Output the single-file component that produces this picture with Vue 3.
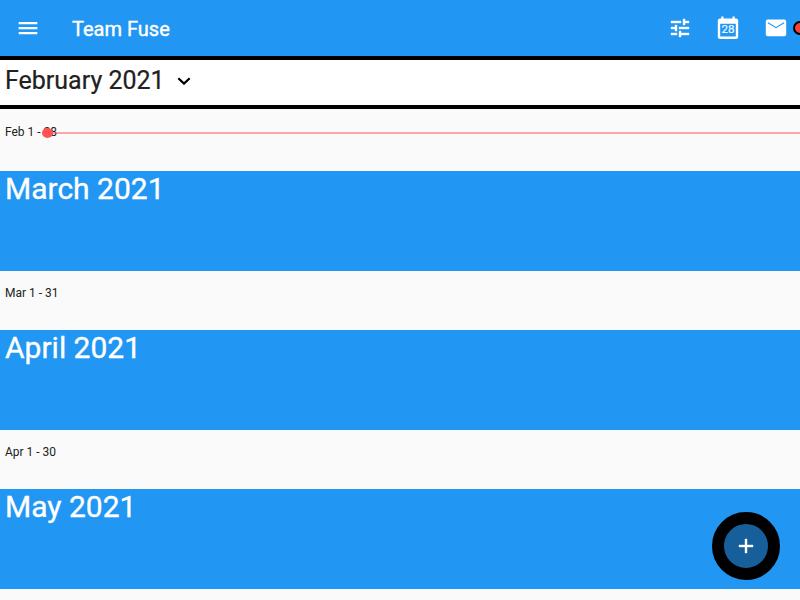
<script setup>
const months = [
  { title: 'February 2021', range: 'Feb 1 - 28', current: true },
  { title: 'March 2021', range: 'Mar 1 - 31' },
  { title: 'April 2021', range: 'Apr 1 - 30' },
  { title: 'May 2021' },
]
</script>

<template>
  <div class="screen">
    <header class="bar">
      <svg class="icon" viewBox="0 0 24 24"><path d="M2.700 18.200h18.600v-2.300H2.700zm0-5h18.600v-2.300H2.700zm0-7.300v2.300h18.600V5.900z" /></svg>
      <h1 class="title">Team Fuse</h1>
      <div class="actions">
        <svg class="icon bold" viewBox="0 0 24 24"><path d="M3 17v2h6v-2H3zM3 5v2h10V5H3zm10 16v-2h8v-2h-8v-2h-2v6h2zM7 9v2H3v2h4v2h2V9H7zm14 4v-2H11v2h10zm-6-4h2V7h4V5h-4V3h-2v6z" /></svg>
        <div class="today">
          <svg class="icon" viewBox="0 0 24 24"><path fill-rule="evenodd" d="M20 2.400h-1.300V0.600h-2.200V2.400H7.500V0.600H5.300V2.400H4a2.200 2.200 0 0 0-2.200 2v16.600a2.200 2.200 0 0 0 2.200 2.100h16a2.200 2.200 0 0 0 2.200-2.100V4.400a2.200 2.200 0 0 0-2.200-2zM19.800 20.600H4.200V7.800h15.600z" /></svg>
          <span class="day">28</span>
        </div>
        <div class="mail">
          <svg class="icon" viewBox="0 0 24 24"><path d="M3.800 3.600h16.400a2 2 0 0 1 2 2v12.600a2 2 0 0 1-2 2H3.800a2 2 0 0 1-2-2V5.600a2 2 0 0 1 2-2z" /><path class="fold" d="M4 6.700l8 5 8-5" /></svg>
          <i class="badge"></i>
        </div>
      </div>
    </header>
    <div class="picker">
      <span>{{ months[0].title }}</span>
      <svg class="chevron" viewBox="0 0 14 8"><path d="M1.300 1.200 7 6.600l5.700-5.400" /></svg>
    </div>
    <main class="schedule">
      <template v-for="(month, i) in months" :key="month.title">
        <section v-if="i > 0" class="banner">{{ month.title }}</section>
        <div v-if="month.range" class="week" :class="{ current: month.current }">
          <span>{{ month.range }}</span>
          <i v-if="month.current" class="now"></i>
        </div>
      </template>
    </main>
    <button class="fab" aria-label="Add event">
      <svg class="icon bold" viewBox="0 0 24 24"><path d="M19 13h-6v6h-2v-6H5v-2h6V5h2v6h6v2z" /></svg>
    </button>
  </div>
</template>

<style>
body {
  margin: 0;
  overflow: hidden;
}
</style>

<style scoped>
.screen {
  position: relative;
  height: 600px;
  overflow: hidden;
  display: flex;
  flex-direction: column;
  background: #fafafa;
  font-family: Roboto, sans-serif;
  color: #212121;
}
.icon {
  display: block;
  width: 24px;
  height: 24px;
  fill: #fff;
  flex: none;
}
.bold {
  stroke: #fff;
  stroke-width: 0.4;
}
.bar {
  box-sizing: border-box;
  height: 56px;
  flex: none;
  display: flex;
  align-items: center;
  padding-left: 16px;
  background: #2196f3;
}
.title {
  margin: 2px 0 0 32px;
  font-size: 20px;
  line-height: 24px;
  font-weight: 400;
  color: #fff;
  -webkit-text-stroke: 0.4px #fff;
}
.actions {
  margin-left: auto;
  display: flex;
  gap: 24px;
  padding-right: 12px;
}
.today,
.mail {
  position: relative;
}
.day {
  position: absolute;
  left: 0;
  top: 6px;
  width: 24px;
  text-align: center;
  font-size: 11.5px;
  line-height: 14px;
  color: #fff;
  -webkit-text-stroke: 0.15px #fff;
}
.fold {
  fill: none;
  stroke: #2196f3;
  stroke-width: 1.1;
}
.badge {
  position: absolute;
  left: 29px;
  top: 5px;
  box-sizing: border-box;
  width: 14px;
  height: 14px;
  border: 2px solid #000;
  border-radius: 50%;
  background: #f44336;
}
.picker {
  box-sizing: border-box;
  height: 53px;
  flex: none;
  display: flex;
  align-items: center;
  padding: 0 5px 4px;
  border: solid #000;
  border-width: 4px 0;
  background: #fff;
  font-size: 25px;
  -webkit-text-stroke: 0.2px #212121;
}
.chevron {
  width: 14px;
  height: 8px;
  margin-left: 12px;
  fill: none;
  stroke: #000;
  stroke-width: 2.2;
}
.banner {
  box-sizing: border-box;
  height: 100px;
  padding: 0 5px;
  background: #2196f3;
  color: #fff;
  font-size: 30px;
  line-height: 35px;
  -webkit-text-stroke: 0.35px #fff;
}
.week {
  position: relative;
  box-sizing: border-box;
  height: 59px;
  padding: 15px 5px 0;
  font-size: 12px;
  line-height: 14px;
}
.week.current {
  height: 62px;
  padding-top: 16px;
}
.now {
  position: absolute;
  left: 47px;
  right: 0;
  top: 23px;
  height: 2px;
  background: rgba(255, 82, 82, 0.5);
}
.now::before {
  content: '';
  position: absolute;
  left: -5px;
  top: -4px;
  width: 11px;
  height: 10px;
  border-radius: 50%;
  background: #ff5252;
}
.fab {
  position: absolute;
  right: 20px;
  bottom: 20px;
  box-sizing: border-box;
  width: 68px;
  height: 68px;
  padding: 0;
  display: flex;
  align-items: center;
  justify-content: center;
  border: 12px solid #000;
  border-radius: 50%;
  background: #175f9b;
}
</style>
